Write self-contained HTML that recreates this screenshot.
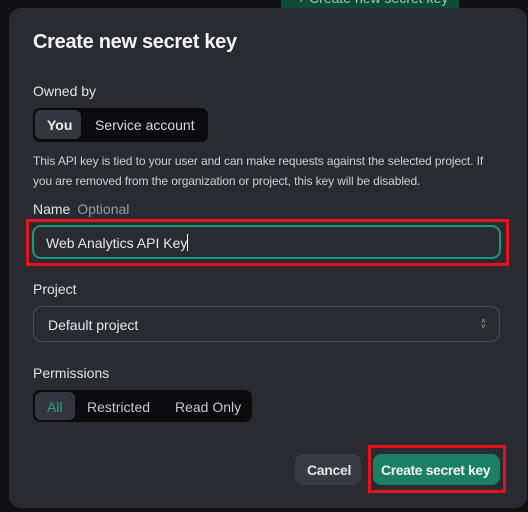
<!DOCTYPE html><html><head><style>
*{box-sizing:border-box;margin:0;padding:0}
body{width:528px;height:512px;background:#111113;font-family:"Liberation Sans",sans-serif;position:relative;overflow:hidden;color:#ececf1}
.a{position:absolute}
.m{left:9px;top:8px;width:518px;height:500px;background:#2a2b31;border-radius:12px}
.lbl{font-size:14px;color:#e4e4e8}
.seg{background:#0c0c0e;border-radius:7px}
.pill{background:#34363e;border-radius:6px}
</style></head><body>
<div class="a" style="left:281px;top:0;width:178px;height:8px;background:#0f4a36;overflow:hidden"><div style="color:#9fc8b6;font-size:14px;margin-top:-10px;margin-left:16px">+ Create new secret key</div></div>
<div class="a m"></div>
<div class="a" style="left:33px;top:31px;font-size:20px;font-weight:bold;color:#f4f4f6;letter-spacing:-0.3px">Create new secret key</div>
<div class="a lbl" style="left:33px;top:83px">Owned by</div>
<div class="a seg" style="left:33px;top:108px;width:175px;height:34px"></div>
<div class="a pill" style="left:35px;top:110px;width:46px;height:29px"></div>
<div class="a" style="left:47px;top:117px;font-size:14px;font-weight:bold">You</div>
<div class="a" style="left:95px;top:117px;font-size:14px;color:#d8d8dc">Service account</div>
<div class="a" style="left:33px;top:151px;font-size:12px;line-height:20px;color:#d0d0d4;width:462px;letter-spacing:-0.1px">This API key is tied to your user and can make requests against the selected project. If you are removed from the organization or project, this key will be disabled.</div>
<div class="a lbl" style="left:33px;top:201px">Name <span style="color:#9a9aa2;margin-left:3px">Optional</span></div>
<div class="a" style="left:26px;top:219px;width:483px;height:47px;border:3px solid #e5121d"></div>
<div class="a" style="left:32px;top:225px;width:469px;height:34px;border:2px solid #17997a;border-radius:9px"></div>
<div class="a" style="left:46px;top:234px;font-size:14px;color:#e8e8ec">Web Analytics API Key<span style="display:inline-block;width:1px;height:17px;background:#fff;vertical-align:-3px"></span></div>
<div class="a lbl" style="left:33px;top:281px">Project</div>
<div class="a" style="left:33px;top:306px;width:467px;height:36px;border:1px solid #4a4b55;border-radius:9px"></div>
<div class="a" style="left:48px;top:317px;font-size:14px;color:#e8e8ec">Default project</div>
<div class="a" style="left:481px;top:319px;font-size:8px;color:#aaa;line-height:5px">˄<br>˅</div>
<div class="a lbl" style="left:33px;top:365px">Permissions</div>
<div class="a seg" style="left:33px;top:390px;width:219px;height:32px"></div>
<div class="a pill" style="left:35px;top:392px;width:40px;height:28px"></div>
<div class="a" style="left:47px;top:399px;font-size:14px;color:#1fa583">All</div>
<div class="a" style="left:87px;top:399px;font-size:14px;color:#c8c8cc">Restricted</div>
<div class="a" style="left:175px;top:399px;font-size:14px;color:#c8c8cc">Read Only</div>
<div class="a" style="left:295px;top:454px;width:66px;height:31px;background:#383a41;border-radius:8px"></div>
<div class="a" style="left:307px;top:462px;font-size:14px;font-weight:bold;color:#e4e4e8;letter-spacing:-0.3px">Cancel</div>
<div class="a" style="left:368px;top:445px;width:138px;height:48px;border:3px solid #e5121d"></div>
<div class="a" style="left:373px;top:454px;width:127px;height:31px;background:#1b7f63;border-radius:8px"></div>
<div class="a" style="left:381px;top:462px;font-size:14px;font-weight:bold;color:#f2f2f2;letter-spacing:-0.4px">Create secret key</div>
</body></html>
